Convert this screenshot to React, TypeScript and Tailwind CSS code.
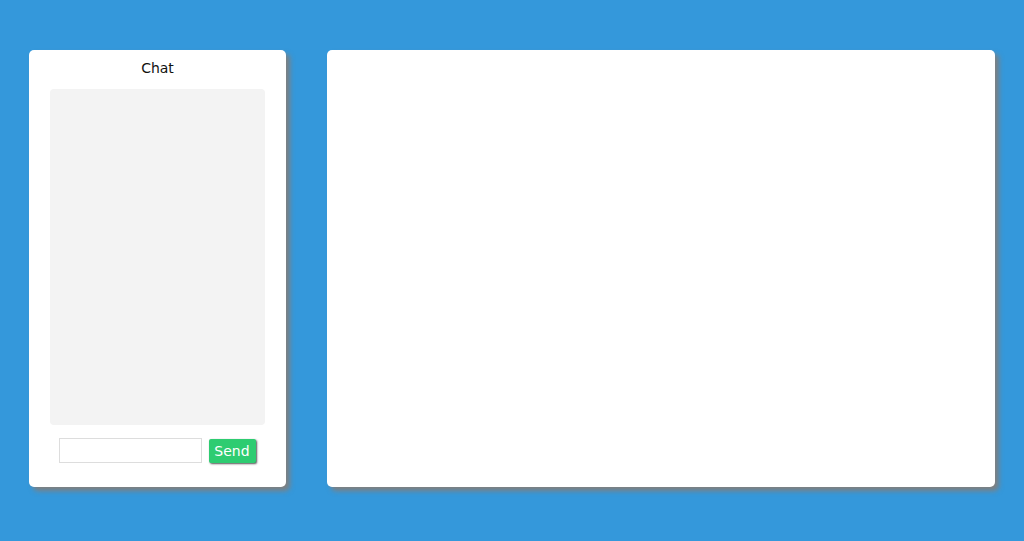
export default function App() {
  return (
    <div
      className="flex h-[541px] w-full gap-[41px] bg-[#3498db] px-[29px] pt-[50px] pb-[54px]"
      style={{ fontFamily: '"DejaVu Sans", Verdana, sans-serif' }}
    >
      {/* Chat panel */}
      <div className="flex w-[257px] shrink-0 flex-col rounded-[5px] bg-white shadow-[4px_4px_5px_#7f7f7f]">
        <h1 className="pt-[9px] text-center text-[14px] leading-[18px] text-[#111]">Chat</h1>
        <div className="mx-[21px] mt-[12px] h-[336px] rounded-[4px] bg-[#f3f3f3]" />
        <div className="mt-[13px] flex items-center justify-center gap-[7px] pr-[1px]">
          <input
            type="text"
            className="h-[25px] w-[143px] border border-[#dddddd] bg-white px-1 text-[13px] outline-none"
          />
          <button className="h-[24px] w-[47px] rounded-[2px] bg-[#2ecc71] text-[14px] leading-[24px] text-white shadow-[1px_1px_2px_#555]">
            Send
          </button>
        </div>
      </div>

      {/* Main panel */}
      <div className="flex-1 rounded-[5px] bg-white shadow-[4px_4px_5px_#7f7f7f]" />
    </div>
  );
}
